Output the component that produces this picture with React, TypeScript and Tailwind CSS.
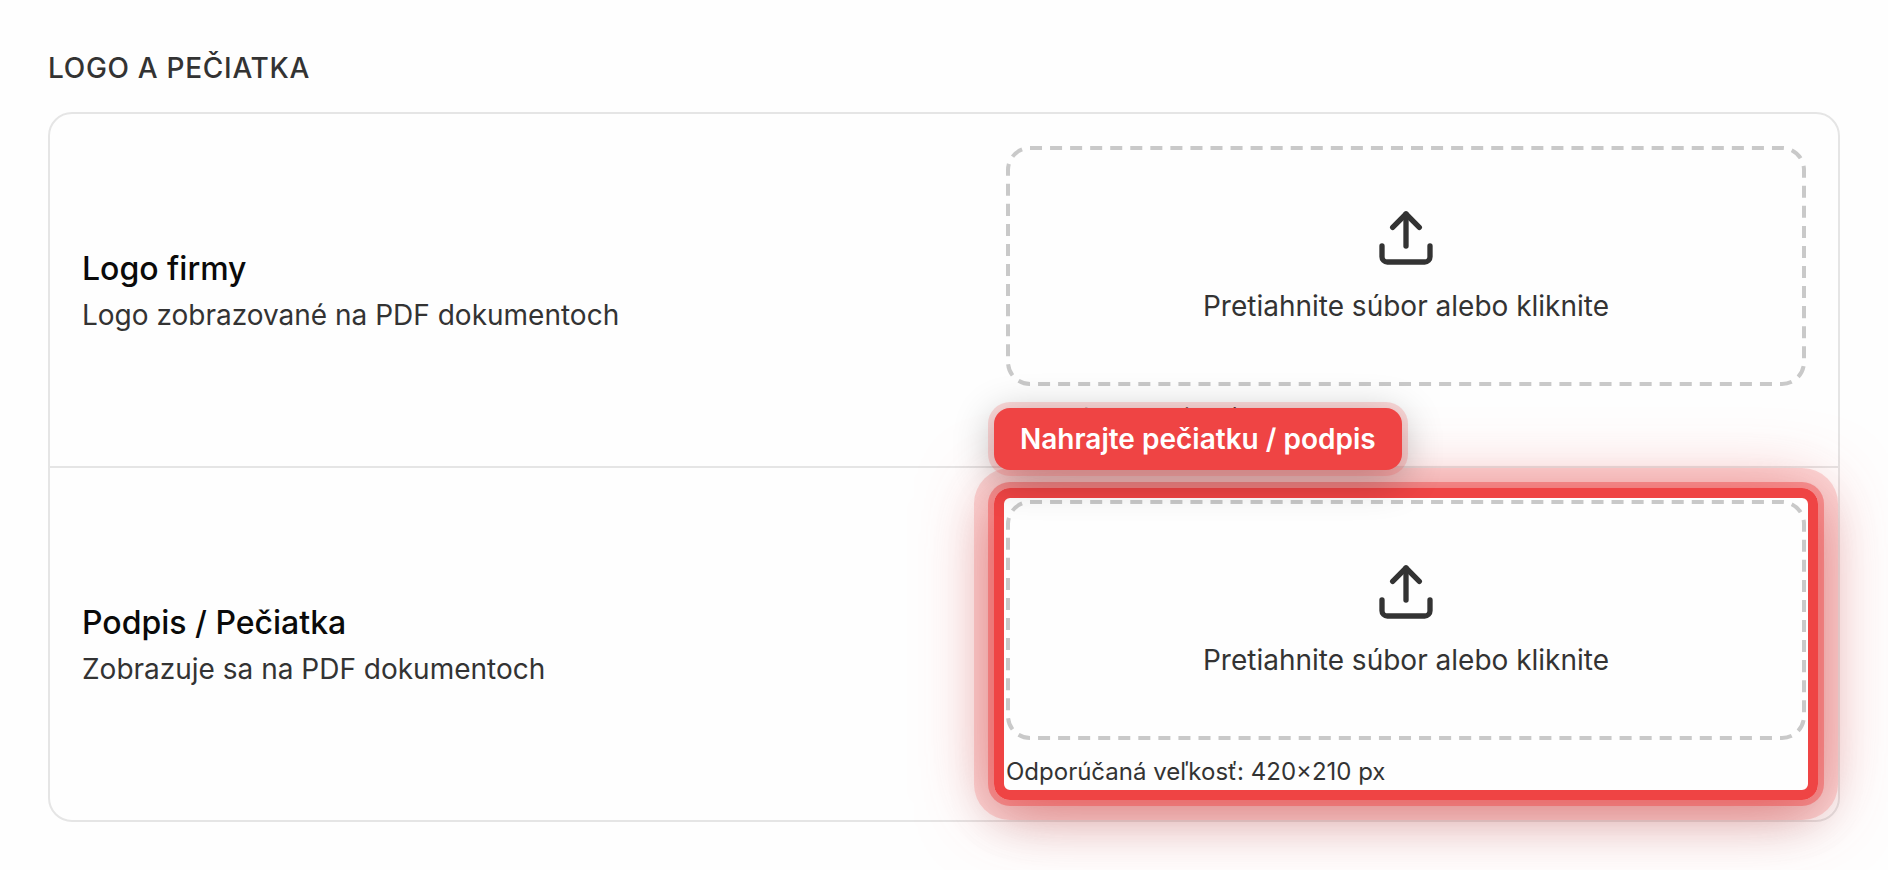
import { Upload } from "lucide-react";

type UploadRowProps = {
  id: string;
  title: string;
  description: string;
  hint: string;
  callout?: string;
};

function Highlight({ label }: { label: string }) {
  return (
    <div className="pointer-events-none absolute -inset-3 z-10">
      <div className="h-full rounded-2xl border-10 border-[#ef4444] shadow-[0_0_0_6px_rgba(239,68,68,0.45),0_0_0_20px_rgba(239,68,68,0.2),0_6px_72px_rgba(239,68,68,0.55),0_16px_48px_rgba(0,0,0,0.18)]" />
      <div
        role="tooltip"
        className="absolute bottom-full left-0 mb-[18px] rounded-2xl bg-[#ef4444] px-[26px] py-[13px] text-[28px] leading-9 font-semibold whitespace-nowrap text-white shadow-[0_0_0_6px_rgba(239,68,68,0.2),0_8px_40px_rgba(0,0,0,0.3)]"
      >
        {label}
      </div>
    </div>
  );
}

function DashedOutline() {
  return (
    <svg className="absolute inset-0 size-full" fill="none" aria-hidden="true">
      <rect
        x="2"
        y="2"
        rx="22"
        pathLength="2020"
        strokeDasharray="12 8"
        strokeWidth="4"
        className="h-[calc(100%-4px)] w-[calc(100%-4px)] stroke-[#c9c9c9]"
      />
    </svg>
  );
}

function UploadRow({ id, title, description, hint, callout }: UploadRowProps) {
  return (
    <div className="flex items-center gap-8 p-8">
      <div className="flex min-w-0 flex-1 flex-col gap-0.5">
        <h3 id={id} className="text-[32px] leading-12 font-medium text-[#0a0a0a]">
          {title}
        </h3>
        <p className="text-[28px] leading-10 text-[#333333]">{description}</p>
      </div>
      <div className="relative flex min-w-0 basis-[800px] flex-col gap-4">
        <button
          type="button"
          aria-describedby={id}
          className="relative flex h-60 w-full cursor-pointer flex-col items-center justify-center gap-4 rounded-3xl text-[28px] leading-10 text-[#333333]"
        >
          <DashedOutline />
          <Upload size={64} strokeWidth={2} aria-hidden="true" />
          <span>Pretiahnite súbor alebo kliknite</span>
        </button>
        <p className="text-2xl leading-8 text-[#333333]">{hint}</p>
        {callout && <Highlight label={callout} />}
      </div>
    </div>
  );
}

export default function App() {
  return (
    <main className="min-h-screen overflow-hidden bg-[#fefefe] p-12 font-['Inter',sans-serif]">
      <section className="flex flex-col gap-6">
        <h2 className="text-[28px] leading-10 font-medium tracking-wide text-[#333333] uppercase">
          Logo a pečiatka
        </h2>
        <div className="divide-y-2 divide-[#e5e5e5] rounded-3xl border-2 border-[#e5e5e5]">
          <UploadRow
            id="company-logo"
            title="Logo firmy"
            description="Logo zobrazované na PDF dokumentoch"
            hint="Odporúčaná veľkosť: 420×210 px"
          />
          <UploadRow
            id="signature-stamp"
            title="Podpis / Pečiatka"
            description="Zobrazuje sa na PDF dokumentoch"
            hint="Odporúčaná veľkosť: 420×210 px"
            callout="Nahrajte pečiatku / podpis"
          />
        </div>
      </section>
    </main>
  );
}
